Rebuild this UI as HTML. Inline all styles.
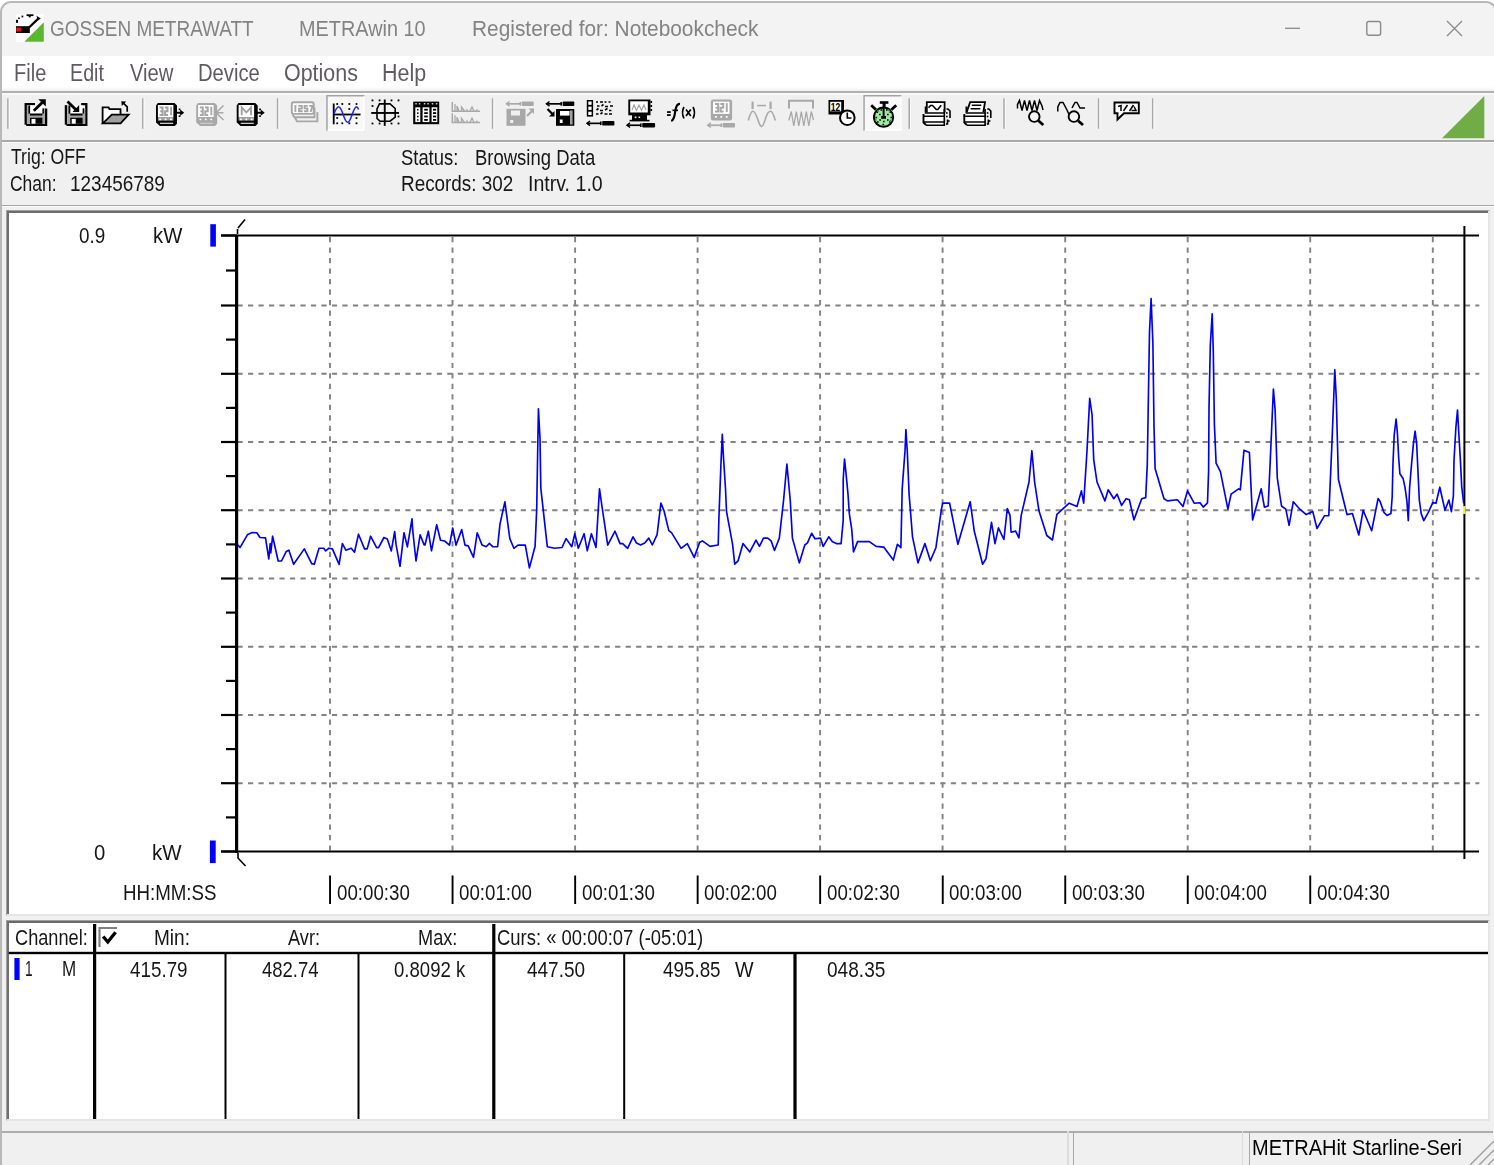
<!DOCTYPE html>
<html><head><meta charset="utf-8">
<style>
html,body{margin:0;padding:0;}
body{width:1494px;height:1165px;overflow:hidden;position:relative;background:#f0f0f0;font-family:"Liberation Sans",sans-serif;}
.a{position:absolute;}
.t{position:absolute;white-space:pre;line-height:1;transform-origin:0 0;font-family:"Liberation Sans",sans-serif;}
svg{position:absolute;left:0;top:0;}
.g{stroke:#828282;stroke-width:1.9;stroke-dasharray:5.2 5.29;}
.gv{stroke:#828282;stroke-width:1.9;stroke-dasharray:5.2 5.29;}
.tk{stroke:#000;stroke-width:2.2;}
</style></head><body>
<!-- window frame -->
<div class="a" style="left:0;top:0;width:1494px;height:1165px;background:#fff"></div>
<div class="a" style="left:0px;top:1px;width:1497px;height:1180px;background:#b8b8b8;border-radius:11px"></div>
<div class="a" style="left:2px;top:2.6px;width:1493px;height:1170px;background:#f0f0f0;border-radius:9.5px"></div>
<div class="a" style="left:2px;top:2.6px;width:1493px;height:53.4px;background:#f3f3f3;border-top-left-radius:9.5px;border-top-right-radius:9.5px"></div>
<!-- menu bar -->
<div class="a" style="left:2px;top:56px;width:1492px;height:35px;background:linear-gradient(#fff 0px,#fff 31px,#f0f0f0 35px)"></div>
<div class="a" style="left:2px;top:91px;width:1492px;height:2px;background:#b0b0b0"></div>
<div class="a" style="left:2px;top:93px;width:1492px;height:2px;background:#f8f8f8"></div>
<!-- toolbar bottom line -->
<div class="a" style="left:2px;top:140px;width:1492px;height:1.5px;background:#a9a9a9"></div>
<div class="a" style="left:2px;top:141.5px;width:1492px;height:1px;background:#fafafa"></div>
<!-- info bottom line -->
<div class="a" style="left:2px;top:204.7px;width:1492px;height:1.5px;background:#a5a5a5"></div>
<div class="a" style="left:2px;top:206.2px;width:1492px;height:1px;background:#fcfcfc"></div>
<!-- chart panel -->
<div class="a" style="left:5.5px;top:210.3px;width:1484.5px;height:705.3px;box-sizing:border-box;border-top:1.3px solid #a0a0a0;border-left:1.4px solid #a0a0a0;border-right:2px solid #e5e5e5;border-bottom:2px solid #e5e5e5"><div style="width:100%;height:100%;box-sizing:border-box;border-top:2.1px solid #6e6e6e;border-left:2px solid #6e6e6e;background:#fff"></div></div>
<!-- table panel -->
<div class="a" style="left:5.5px;top:920.4px;width:1484.5px;height:200.6px;box-sizing:border-box;border-top:1.7px solid #a0a0a0;border-left:1.4px solid #a0a0a0;border-right:2px solid #e5e5e5;border-bottom:2px solid #e5e5e5"><div style="width:100%;height:100%;box-sizing:border-box;border-top:2.1px solid #6a6a6a;border-left:2px solid #707070;background:#fff"></div></div>
<!-- status bar -->
<div class="a" style="left:2px;top:1131px;width:1491px;height:2px;background:#adadad"></div>
<div class="a" style="left:1067px;top:1131px;width:1.5px;height:34px;background:#dcdcdc"></div>
<div class="a" style="left:1073px;top:1131px;width:170px;height:34px;box-sizing:border-box;border-left:1.5px solid #a8a8a8;border-right:1.5px solid #dcdcdc"></div>
<div class="a" style="left:1249px;top:1131px;width:245px;height:34px;box-sizing:border-box;border-left:1.5px solid #a8a8a8"></div>
<svg width="1494" height="1165" viewBox="0 0 1494 1165">
<!-- grip -->
<line x1="1470" y1="1165" x2="1494" y2="1141" stroke="#a0a0a0" stroke-width="1.5"/>
<line x1="1479" y1="1165" x2="1494" y2="1150" stroke="#a0a0a0" stroke-width="1.5"/>
<line x1="1488" y1="1165" x2="1494" y2="1159" stroke="#a0a0a0" stroke-width="1.5"/>
<!-- window controls -->
<line x1="1285" y1="28.3" x2="1300" y2="28.3" stroke="#8a8a8a" stroke-width="1.3"/>
<rect x="1366.8" y="21.5" width="13.8" height="13.8" rx="2" fill="none" stroke="#8a8a8a" stroke-width="1.4"/>
<path d="M1447 21 L1462 36 M1462 21 L1447 36" stroke="#8a8a8a" stroke-width="1.3"/>
<!-- chart -->
<line x1="237.5" y1="305.5" x2="1479.3" y2="305.5" class="g"/>
<line x1="237.5" y1="373.8" x2="1479.3" y2="373.8" class="g"/>
<line x1="237.5" y1="442.0" x2="1479.3" y2="442.0" class="g"/>
<line x1="237.5" y1="510.2" x2="1479.3" y2="510.2" class="g"/>
<line x1="237.5" y1="578.5" x2="1479.3" y2="578.5" class="g"/>
<line x1="237.5" y1="646.8" x2="1479.3" y2="646.8" class="g"/>
<line x1="237.5" y1="715.0" x2="1479.3" y2="715.0" class="g"/>
<line x1="237.5" y1="783.2" x2="1479.3" y2="783.2" class="g"/>
<line x1="330.0" y1="237" x2="330.0" y2="850.5" class="gv"/>
<line x1="452.5" y1="237" x2="452.5" y2="850.5" class="gv"/>
<line x1="575.1" y1="237" x2="575.1" y2="850.5" class="gv"/>
<line x1="697.6" y1="237" x2="697.6" y2="850.5" class="gv"/>
<line x1="820.1" y1="237" x2="820.1" y2="850.5" class="gv"/>
<line x1="942.6" y1="237" x2="942.6" y2="850.5" class="gv"/>
<line x1="1065.2" y1="237" x2="1065.2" y2="850.5" class="gv"/>
<line x1="1187.7" y1="237" x2="1187.7" y2="850.5" class="gv"/>
<line x1="1310.2" y1="237" x2="1310.2" y2="850.5" class="gv"/>
<line x1="1432.8" y1="237" x2="1432.8" y2="850.5" class="gv"/>
<line x1="221" y1="235.5" x2="237" y2="235.5" class="tk"/>
<line x1="221" y1="305.5" x2="237" y2="305.5" class="tk"/>
<line x1="221" y1="373.8" x2="237" y2="373.8" class="tk"/>
<line x1="221" y1="442.0" x2="237" y2="442.0" class="tk"/>
<line x1="221" y1="510.2" x2="237" y2="510.2" class="tk"/>
<line x1="221" y1="578.5" x2="237" y2="578.5" class="tk"/>
<line x1="221" y1="646.8" x2="237" y2="646.8" class="tk"/>
<line x1="221" y1="715.0" x2="237" y2="715.0" class="tk"/>
<line x1="221" y1="783.2" x2="237" y2="783.2" class="tk"/>
<line x1="221" y1="851.5" x2="237" y2="851.5" class="tk"/>
<line x1="226" y1="270.5" x2="237" y2="270.5" class="tk"/>
<line x1="226" y1="339.6" x2="237" y2="339.6" class="tk"/>
<line x1="226" y1="407.9" x2="237" y2="407.9" class="tk"/>
<line x1="226" y1="476.1" x2="237" y2="476.1" class="tk"/>
<line x1="226" y1="544.4" x2="237" y2="544.4" class="tk"/>
<line x1="226" y1="612.6" x2="237" y2="612.6" class="tk"/>
<line x1="226" y1="680.9" x2="237" y2="680.9" class="tk"/>
<line x1="226" y1="749.1" x2="237" y2="749.1" class="tk"/>
<line x1="226" y1="817.4" x2="237" y2="817.4" class="tk"/>
<line x1="236.6" y1="235" x2="236.6" y2="853" stroke="#000" stroke-width="3.2"/>
<line x1="221" y1="235.5" x2="1479" y2="235.5" stroke="#000" stroke-width="2.2"/>
<line x1="221" y1="851.5" x2="1479" y2="851.5" stroke="#000" stroke-width="2.2"/>
<line x1="1464.4" y1="226" x2="1464.4" y2="859" stroke="#000" stroke-width="2"/>
<path d="M237.5 229 L237.5 234 M238 228 L245 219.5" stroke="#000" stroke-width="1.6" fill="none"/>
<path d="M238 853 L238 858 L245.5 866" stroke="#000" stroke-width="1.6" fill="none"/>
<rect x="210.3" y="224.2" width="5.6" height="22.4" fill="#0000ff"/>
<rect x="209.9" y="840.5" width="5.8" height="22.6" fill="#0000ff"/>
<polyline points="238.0,544.9 240.0,547.6 247.4,534.8 252.0,532.6 256.8,532.8 260.0,537.5 265.5,537.9 268.8,559.0 270.2,543.5 270.8,553.0 272.6,536.2 278.2,561.0 281.5,561.0 286.2,551.6 288.9,550.2 293.6,564.3 304.3,548.9 311.7,563.6 314.3,564.3 319.0,548.2 323.7,548.2 325.7,550.9 329.0,548.2 332.4,548.9 339.1,564.3 342.4,543.5 345.8,550.2 351.2,548.2 354.5,552.2 358.5,534.2 364.5,548.9 367.2,548.9 370.6,536.2 376.6,547.6 378.6,547.6 383.9,537.5 387.3,538.9 391.3,550.9 394.7,531.5 396.0,544.2 400.0,566.3 404.0,532.8 407.4,546.9 412.0,518.8 412.7,530.2 416.0,561.0 420.1,534.8 424.1,544.9 425.0,545.0 428.3,531.2 431.5,550.8 436.7,524.7 440.5,540.2 444.6,541.0 449.5,545.1 452.7,528.0 456.0,545.1 461.7,529.6 465.0,545.1 468.2,545.9 473.5,557.3 477.2,532.8 482.1,545.1 486.2,546.7 489.4,543.4 492.7,546.7 497.6,546.7 500.0,523.9 504.9,501.9 509.8,538.6 513.9,548.3 518.0,545.1 525.3,545.1 529.4,567.9 535.1,546.3 536.7,509.2 538.4,408.9 540.0,438.2 540.8,488.0 547.3,546.7 554.7,548.3 562.0,547.5 566.1,538.6 571.8,546.7 574.8,533.7 578.3,548.3 584.1,533.7 587.3,550.8 591.4,533.7 596.0,547.5 599.5,488.8 601.2,501.0 607.7,545.1 615.0,531.2 620.0,543.6 622.7,543.6 627.6,548.4 633.0,536.8 636.5,543.0 640.6,545.0 644.7,543.0 648.8,538.1 652.3,545.0 657.1,534.7 660.9,503.1 664.0,510.7 668.8,530.6 671.5,532.6 681.1,548.4 687.3,543.6 694.2,557.4 699.7,542.3 702.4,540.9 710.0,546.4 718.2,545.0 718.9,518.2 721.0,462.6 722.3,434.4 723.3,454.3 725.5,488.7 726.5,511.3 732.6,544.3 734.7,564.2 738.1,560.8 743.0,543.6 749.8,551.9 756.0,540.2 759.4,546.4 763.5,538.1 767.7,538.1 771.1,540.9 774.5,550.5 779.3,538.1 783.5,501.0 786.9,464.0 790.3,501.0 792.4,538.1 799.3,562.9 804.8,545.0 807.5,542.9 811.6,533.3 815.0,538.8 820.5,538.1 823.2,546.4 828.7,536.8 832.2,541.6 836.3,543.6 841.1,543.6 843.2,520.3 843.2,479.8 844.5,459.1 845.9,472.2 848.0,494.2 849.3,513.4 851.8,529.9 853.5,551.9 857.6,541.6 862.4,541.6 869.3,541.6 876.1,546.4 883.7,547.1 893.3,560.1 897.4,544.3 900.9,547.7 902.2,488.7 905.0,450.9 905.9,429.6 907.3,451.6 909.1,494.2 912.5,536.8 918.0,562.9 924.9,543.6 930.4,560.8 935.9,547.7 941.4,509.3 942.7,503.1 949.6,503.1 957.9,544.3 970.2,501.7 974.3,531.3 982.6,564.2 986.0,558.7 991.5,522.3 995.0,543.6 998.4,527.8 1003.9,539.5 1007.3,508.6 1010.0,515.4 1011.1,532.2 1015.6,531.1 1018.9,537.8 1021.2,515.4 1029.0,482.0 1031.9,450.7 1034.6,482.0 1039.0,511.0 1046.8,535.5 1052.4,540.0 1056.9,514.3 1069.2,503.2 1077.0,506.5 1081.4,490.9 1083.7,503.2 1087.0,450.7 1089.7,398.3 1092.1,415.0 1093.7,459.6 1097.0,482.0 1104.9,500.9 1108.2,489.8 1113.8,498.7 1117.1,494.2 1121.6,505.4 1126.1,498.7 1129.4,499.8 1133.9,519.9 1141.7,498.7 1145.7,497.6 1147.3,464.1 1148.4,397.1 1149.5,332.4 1151.1,298.5 1152.9,343.6 1154.0,426.2 1155.1,468.6 1164.0,498.7 1167.4,500.9 1177.4,499.8 1183.0,506.5 1187.5,490.9 1194.2,503.2 1200.0,502.8 1203.2,507.1 1207.5,502.8 1208.6,471.7 1209.0,408.4 1210.3,345.1 1212.2,313.9 1213.3,351.5 1214.4,424.5 1216.1,463.1 1220.4,471.7 1227.9,509.2 1231.1,494.2 1238.6,488.8 1240.3,489.9 1244.0,450.2 1249.4,452.4 1252.6,520.0 1261.2,488.8 1264.4,507.1 1268.2,506.0 1270.8,448.1 1273.4,389.1 1275.1,409.4 1277.3,478.1 1281.5,506.0 1285.8,509.2 1289.1,525.3 1293.3,501.7 1299.8,509.2 1306.2,514.6 1312.7,511.4 1317.0,528.5 1324.5,515.7 1328.8,515.7 1332.0,441.6 1334.8,369.7 1336.3,398.7 1338.4,479.2 1347.0,514.6 1352.4,513.5 1358.8,535.0 1363.1,510.3 1371.7,530.7 1378.1,498.5 1380.0,501.3 1383.9,512.3 1387.1,515.5 1390.9,513.6 1392.2,496.8 1392.9,465.9 1394.2,435.0 1396.1,419.0 1397.4,433.1 1398.7,458.2 1399.9,473.7 1403.2,478.8 1405.1,487.8 1407.0,502.0 1407.7,512.3 1408.3,520.6 1409.6,487.8 1411.5,464.6 1413.5,442.8 1415.1,431.2 1416.7,444.1 1418.0,472.4 1419.3,500.0 1421.2,513.6 1423.8,520.6 1428.3,512.3 1432.8,502.6 1436.0,503.3 1439.8,487.2 1445.0,510.3 1448.9,500.0 1451.4,511.6 1453.4,495.5 1454.0,460.8 1455.9,427.3 1457.5,410.0 1458.5,428.0 1460.4,460.1 1461.7,486.5 1463.7,503.3" fill="none" stroke="#0000f0" stroke-width="1.65" stroke-linejoin="round"/>
<rect x="1463" y="506" width="2.5" height="8" fill="#f0f040"/>
<!-- x ticks -->
<rect x="329.1" y="875.5" width="1.9" height="28.5" fill="#000"/>
<rect x="451.6" y="875.5" width="1.9" height="28.5" fill="#000"/>
<rect x="574.2" y="875.5" width="1.9" height="28.5" fill="#000"/>
<rect x="696.7" y="875.5" width="1.9" height="28.5" fill="#000"/>
<rect x="819.2" y="875.5" width="1.9" height="28.5" fill="#000"/>
<rect x="941.8" y="875.5" width="1.9" height="28.5" fill="#000"/>
<rect x="1064.3" y="875.5" width="1.9" height="28.5" fill="#000"/>
<rect x="1186.8" y="875.5" width="1.9" height="28.5" fill="#000"/>
<rect x="1309.3" y="875.5" width="1.9" height="28.5" fill="#000"/>
<!-- table lines -->
<rect x="93" y="924" width="3.2" height="195" fill="#000"/>
<rect x="492.2" y="924" width="3.2" height="195" fill="#000"/>
<rect x="793.4" y="953" width="3.2" height="166" fill="#000"/>
<rect x="224.5" y="953" width="2" height="166" fill="#000"/>
<rect x="357.5" y="953" width="2" height="166" fill="#000"/>
<rect x="623.2" y="953" width="2" height="166" fill="#000"/>
<rect x="8.7" y="951.8" width="1479.3" height="2.4" fill="#000"/>
<!-- blue marker row -->
<rect x="14.4" y="958" width="5.2" height="22" fill="#0000ff"/>
<!-- checkbox -->
<path d="M99.5 947 L99.5 928 L117 928" stroke="#808080" stroke-width="2.2" fill="none"/>
<path d="M103.2 936.5 L107.8 942 L115.6 932.2" stroke="#000" stroke-width="3.3" fill="none"/>
<!-- green triangle -->
<polygon points="1442,138.2 1484.3,96 1484.3,138.2" fill="#70ad47"/>
<rect x="7.15" y="98.3" width="1.6" height="30.5" fill="#a8a8a8"/><rect x="8.75" y="98.3" width="1" height="30.5" fill="#fbfbfb"/>
<rect x="142.05" y="98.3" width="1.6" height="30.5" fill="#a8a8a8"/><rect x="143.65" y="98.3" width="1" height="30.5" fill="#fbfbfb"/>
<rect x="276.85" y="98.3" width="1.6" height="30.5" fill="#a8a8a8"/><rect x="278.45000000000005" y="98.3" width="1" height="30.5" fill="#fbfbfb"/>
<rect x="491.85" y="98.3" width="1.6" height="30.5" fill="#a8a8a8"/><rect x="493.45000000000005" y="98.3" width="1" height="30.5" fill="#fbfbfb"/>
<rect x="908.45" y="98.3" width="1.6" height="30.5" fill="#a8a8a8"/><rect x="910.0500000000001" y="98.3" width="1" height="30.5" fill="#fbfbfb"/>
<rect x="1003.25" y="98.3" width="1.6" height="30.5" fill="#a8a8a8"/><rect x="1004.85" y="98.3" width="1" height="30.5" fill="#fbfbfb"/>
<rect x="1097.85" y="98.3" width="1.6" height="30.5" fill="#a8a8a8"/><rect x="1099.4499999999998" y="98.3" width="1" height="30.5" fill="#fbfbfb"/>
<rect x="1151.95" y="98.3" width="1.6" height="30.5" fill="#a8a8a8"/><rect x="1153.55" y="98.3" width="1" height="30.5" fill="#fbfbfb"/>
<rect x="326.2" y="95" width="38.19999999999999" height="35.8" fill="#f8f8f8"/>
<path d="M326.95 130.8 V95.75 H364.4" stroke="#a3a3a3" stroke-width="1.5" fill="none"/>
<path d="M327.7 130.2 H363.9 V96.5" stroke="#ffffff" stroke-width="1.2" fill="none"/>
<rect x="863.3" y="95" width="38.10000000000002" height="35.8" fill="#f8f8f8"/>
<path d="M864.05 130.8 V95.75 H901.4" stroke="#a3a3a3" stroke-width="1.5" fill="none"/>
<path d="M864.8 130.2 H900.9 V96.5" stroke="#ffffff" stroke-width="1.2" fill="none"/>
<path d="M25.7 124.7 V104.2 H35.0" stroke="#000" stroke-width="2.3" fill="none"/><path d="M46.099999999999994 108.4 V124.80000000000001 H26.2" stroke="#000" stroke-width="2.3" fill="none"/><rect x="28.7" y="105.5" width="14" height="8.5" fill="#fff"/><rect x="27.0" y="105.5" width="3" height="18.2" fill="#a6a6a6"/><rect x="42.5" y="108.4" width="2.5" height="15.3" fill="#a6a6a6"/><rect x="30.0" y="115.5" width="12.5" height="2.1" fill="#a6a6a6"/><rect x="28.4" y="105.5" width="1.7" height="8.2" fill="#000"/><rect x="42.5" y="108.4" width="1.4" height="5.3" fill="#000"/><rect x="30.0" y="113.5" width="12.5" height="2.1" fill="#000"/><rect x="30.0" y="117.60000000000001" width="12.5" height="6.2" fill="#000"/><rect x="31.5" y="118.9" width="4" height="4.8" fill="#fff"/>
<path d="M33.8 110.8 L42.5 102.3" stroke="#000" stroke-width="2.8"/><polygon points="38.3,99.2 45.8,99.2 45.8,106.5" fill="#000"/>
<path d="M65.9 105.2 V124.7" stroke="#000" stroke-width="2.3" fill="none"/><path d="M81.10000000000001 104.2 H86.30000000000001 V124.80000000000001 H66.4" stroke="#000" stroke-width="2.3" fill="none"/><rect x="68.9" y="105.5" width="14" height="8.5" fill="#fff"/><rect x="67.2" y="105.5" width="3" height="18.2" fill="#a6a6a6"/><rect x="82.7" y="108.4" width="2.5" height="15.3" fill="#a6a6a6"/><rect x="70.2" y="115.5" width="12.5" height="2.1" fill="#a6a6a6"/><rect x="68.60000000000001" y="105.5" width="1.7" height="8.2" fill="#000"/><rect x="82.7" y="108.4" width="1.4" height="5.3" fill="#000"/><rect x="70.2" y="113.5" width="12.5" height="2.1" fill="#000"/><rect x="70.2" y="117.60000000000001" width="12.5" height="6.2" fill="#000"/><rect x="71.7" y="118.9" width="4" height="4.8" fill="#fff"/>
<path d="M67.5 101.5 L76.5 110.2" stroke="#000" stroke-width="2.8"/><polygon points="72.5,112 79.2,112 79.2,105" fill="#000"/>
<path d="M102.6 123.2 V107.4 H108.6 L109.4 109.1 H120.5 V114.2" stroke="#000" stroke-width="1.8" fill="#fff"/><polygon points="102.8,123.3 111.8,114.7 128.6,114.7 120.6,123.3" fill="#a0a0a0" stroke="#000" stroke-width="1.8"/><path d="M127.2 111.7 V106.8 L123.6 103.3" stroke="#000" stroke-width="1.7" fill="none"/><polygon points="121.3,101.2 126.2,101.6 121.8,106" fill="#000"/>
<path d="M157.8 102.9 H174.5 L177 105.4 V123.7 L174.8 126.0 H159.8 L157.8 124.10000000000001 L156 122.4 V105.4 Z" fill="#000"/><rect x="157.9" y="105.0" width="15.5" height="12" fill="#fff"/><path d="M159.6 107.60000000000001 H162.6 V115.0 H159.6 M160.2 111.30000000000001 H162.6" stroke="#a0a0a0" stroke-width="2" fill="none"/><path d="M164.8 107.60000000000001 H167.5 V111.30000000000001 H165.1 V115.0 H168" stroke="#a0a0a0" stroke-width="2" fill="none"/><rect x="170.2" y="106.7" width="1.8" height="8.6" fill="#a0a0a0"/><rect x="157.9" y="117.0" width="15.5" height="3.6" fill="#a0a0a0"/><rect x="159.29999999999998" y="118.60000000000001" width="1.8" height="1.6" fill="#fff"/><rect x="164.7" y="118.60000000000001" width="1.8" height="1.6" fill="#fff"/><rect x="170.1" y="118.60000000000001" width="1.8" height="1.6" fill="#fff"/><rect x="160" y="122.7" width="13.1" height="1.3" fill="#c8c8c8"/>
<rect x="176.5" y="111.8" width="5" height="1.9" fill="#000"/><polygon points="184.2,112.7 180.2,109.6 180.2,115.8" fill="#000"/><rect x="178.7" y="108.5" width="1.7" height="1.7" fill="#000"/><rect x="178.7" y="115.3" width="1.7" height="1.7" fill="#000"/>
<path d="M198.0 102.9 H214.7 L217.2 105.4 V123.7 L215.0 126.0 H200.0 L198.0 124.10000000000001 L196.2 122.4 V105.4 Z" fill="#a8a8a8"/><rect x="198.1" y="105.0" width="15.5" height="12" fill="#fff"/><path d="M199.79999999999998 107.60000000000001 H202.79999999999998 V115.0 H199.79999999999998 M200.39999999999998 111.30000000000001 H202.79999999999998" stroke="#a8a8a8" stroke-width="2" fill="none"/><path d="M205.0 107.60000000000001 H207.7 V111.30000000000001 H205.29999999999998 V115.0 H208.2" stroke="#a8a8a8" stroke-width="2" fill="none"/><rect x="210.39999999999998" y="106.7" width="1.8" height="8.6" fill="#a8a8a8"/><rect x="198.1" y="117.0" width="15.5" height="3.6" fill="#a8a8a8"/><rect x="199.49999999999997" y="118.60000000000001" width="1.8" height="1.6" fill="#fff"/><rect x="204.89999999999998" y="118.60000000000001" width="1.8" height="1.6" fill="#fff"/><rect x="210.29999999999998" y="118.60000000000001" width="1.8" height="1.6" fill="#fff"/><rect x="200.2" y="122.7" width="13.1" height="1.3" fill="#c8c8c8"/>
<path d="M216.5 112.8 H223.5 M217 112 L223.5 105.5 M217 113.5 L223.5 120" stroke="#a8a8a8" stroke-width="1.5" fill="none"/>
<path d="M238.5 102.9 H255.2 L257.7 105.4 V123.7 L255.5 126.0 H240.5 L238.5 124.10000000000001 L236.7 122.4 V105.4 Z" fill="#000"/><rect x="238.6" y="105.0" width="15.5" height="12" fill="#fff"/><path d="M241.7 115.2 V107.4 L246.39999999999998 112.4 L251.0 107.4 V115.2" stroke="#a0a0a0" stroke-width="1.9" fill="none"/><rect x="238.6" y="117.0" width="15.5" height="3.6" fill="#a0a0a0"/><rect x="239.99999999999997" y="118.60000000000001" width="1.8" height="1.6" fill="#fff"/><rect x="245.39999999999998" y="118.60000000000001" width="1.8" height="1.6" fill="#fff"/><rect x="250.79999999999998" y="118.60000000000001" width="1.8" height="1.6" fill="#fff"/><rect x="240.7" y="122.7" width="13.1" height="1.3" fill="#c8c8c8"/>
<rect x="257" y="111.8" width="5" height="1.9" fill="#000"/><polygon points="264.7,112.7 260.7,109.6 260.7,115.8" fill="#000"/><rect x="259.2" y="108.5" width="1.7" height="1.7" fill="#000"/><rect x="259.2" y="115.3" width="1.7" height="1.7" fill="#000"/>
<rect x="291.8" y="102.3" width="21.9" height="11.6" rx="1.8" fill="#fff" stroke="#a6a6a6" stroke-width="1.9"/><path d="M295.4 105 V112 M298.3 105.9 H301.8 V108.6 H299 V111.3 H302.6 M307.8 105.9 H304.6 V108.4 H307.4 V111.3 H304 M309.2 105.9 H312.6 L310.6 112" stroke="#a6a6a6" stroke-width="1.9" fill="none"/><path d="M292.3 114.5 L294.5 117.3 H314.5 V107.5 M295 117.8 L297 121.4 H317.4 V112" stroke="#a6a6a6" stroke-width="1.9" fill="none"/>
<rect x="332.8" y="103.5" width="1.8" height="20.8" fill="#000"/><rect x="333" y="113.6" width="27.5" height="1.8" fill="#000"/>
<rect x="336.3" y="103.1" width="1.8" height="1.8" fill="#000"/>
<rect x="341.40000000000003" y="103.1" width="1.8" height="1.8" fill="#000"/>
<rect x="348.40000000000003" y="103.1" width="1.8" height="1.8" fill="#000"/>
<rect x="355.6" y="103.1" width="1.8" height="1.8" fill="#000"/>
<rect x="348.40000000000003" y="108.1" width="1.8" height="1.8" fill="#000"/>
<rect x="336.3" y="117.1" width="1.8" height="1.8" fill="#000"/>
<rect x="355.6" y="117.1" width="1.8" height="1.8" fill="#000"/>
<rect x="336.3" y="122.39999999999999" width="1.8" height="1.8" fill="#000"/>
<rect x="341.40000000000003" y="122.39999999999999" width="1.8" height="1.8" fill="#000"/>
<rect x="348.40000000000003" y="122.39999999999999" width="1.8" height="1.8" fill="#000"/>
<rect x="355.6" y="122.39999999999999" width="1.8" height="1.8" fill="#000"/>
<path d="M334 113.5 C336 109, 337.5 106.5, 338.7 106.8 C340.5 107.2, 342 111, 343.5 115.5 C345 120, 346.5 122.5, 347.8 122.3 C349.5 122, 351 118, 352.5 113.5 C354 109.5, 355.5 106.8, 356.6 106.8 C357.5 107, 358.2 108.5, 358.6 109.5" stroke="#2020ff" stroke-width="1.5" fill="none"/>
<rect x="383.8" y="99.5" width="1.9" height="26.3" fill="#000"/><rect x="371.2" y="112" width="27.8" height="1.9" fill="#000"/><path d="M379.5 103.9 H390 L395.2 108.5 V117 L390 121.2 H380 L377 118.5 V109 Z" stroke="#000" stroke-width="1.6" fill="none"/>
<rect x="371.6" y="99.5" width="1.8" height="1.8" fill="#000"/>
<rect x="378.70000000000005" y="99.5" width="1.8" height="1.8" fill="#000"/>
<rect x="390.6" y="99.5" width="1.8" height="1.8" fill="#000"/>
<rect x="397.6" y="99.5" width="1.8" height="1.8" fill="#000"/>
<rect x="371.6" y="105.1" width="1.8" height="1.8" fill="#000"/>
<rect x="397.6" y="115.6" width="1.8" height="1.8" fill="#000"/>
<rect x="371.6" y="122.6" width="1.8" height="1.8" fill="#000"/>
<rect x="378.70000000000005" y="122.6" width="1.8" height="1.8" fill="#000"/>
<rect x="390.6" y="122.6" width="1.8" height="1.8" fill="#000"/>
<rect x="397.6" y="122.6" width="1.8" height="1.8" fill="#000"/>
<rect x="413.2" y="101.6" width="26" height="22.6" fill="#000"/><rect x="415.3" y="107.3" width="5" height="14.8" fill="#fff"/><rect x="422.6" y="107.3" width="6.8" height="14.8" fill="#fff"/><rect x="431.6" y="107.3" width="5.7" height="14.8" fill="#fff"/>
<rect x="415.3" y="103" width="1.5" height="1.5" fill="#ccc"/>
<rect x="418.8" y="103" width="1.5" height="1.5" fill="#ccc"/>
<rect x="423.8" y="103" width="1.5" height="1.5" fill="#ccc"/>
<rect x="427.3" y="103" width="1.5" height="1.5" fill="#ccc"/>
<rect x="431.8" y="103" width="1.5" height="1.5" fill="#ccc"/>
<rect x="435.8" y="103" width="1.5" height="1.5" fill="#ccc"/>
<rect x="417" y="109.0" width="1.5" height="1.5" fill="#000"/><rect x="424.2" y="108.8" width="3.6" height="1.8" fill="#000"/><rect x="433" y="108.8" width="3.2" height="1.8" fill="#000"/>
<rect x="417" y="112.4" width="1.5" height="1.5" fill="#000"/><rect x="424.2" y="112.2" width="3.6" height="1.8" fill="#000"/><rect x="433" y="112.2" width="3.2" height="1.8" fill="#000"/>
<rect x="417" y="115.8" width="1.5" height="1.5" fill="#000"/><rect x="424.2" y="115.6" width="3.6" height="1.8" fill="#000"/><rect x="433" y="115.6" width="3.2" height="1.8" fill="#000"/>
<rect x="417" y="119.2" width="1.5" height="1.5" fill="#000"/><rect x="424.2" y="119.0" width="3.6" height="1.8" fill="#000"/><rect x="433" y="119.0" width="3.2" height="1.8" fill="#000"/>
<path d="M452.3 102 V111.2 H480" stroke="#a8a8a8" stroke-width="1.5" fill="none"/><path d="M455 111 V104 M457 111 V106 L459 111 M461.5 111 V107 L464.5 111 M467 111 V109 M470 111 L472 107 L474 111 M476 111 L477.5 109.5" stroke="#a8a8a8" stroke-width="1.3" fill="none"/>
<path d="M452.3 113.3 V122.5 H480" stroke="#a8a8a8" stroke-width="1.5" fill="none"/><path d="M455 122.3 V115.3 M457 122.3 V117.3 L459 122.3 M461.5 122.3 V118.3 L464.5 122.3 M467 122.3 V120.3 M470 122.3 L472 118.3 L474 122.3 M476 122.3 L477.5 120.8" stroke="#a8a8a8" stroke-width="1.3" fill="none"/>
<path d="M509.5 101.5 L506.5 103.8 L509.5 106.1" stroke="#a8a8a8" stroke-width="1.5" fill="none"/><rect x="506.5" y="103.0" width="14.0" height="1.7" fill="#a8a8a8"/><rect x="519.5" y="102.0" width="1.6" height="3.6000000000000005" fill="#a8a8a8"/><rect x="521.7" y="101.6" width="12.000000000000046" height="4.4" rx="0.8" fill="#a8a8a8"/>
<rect x="506.5" y="108.8" width="19" height="17" fill="#a8a8a8"/><rect x="511" y="110.5" width="9" height="5" fill="#f0f0f0"/><rect x="510.2" y="120" width="3" height="3" fill="#f0f0f0"/><path d="M527 116 L532 111" stroke="#a8a8a8" stroke-width="2.2"/><polygon points="528.5,108.5 534,108.5 534,114" fill="#a8a8a8"/>
<path d="M549.5 101.5 L546.5 103.8 L549.5 106.1" stroke="#000" stroke-width="1.5" fill="none"/><rect x="546.5" y="103.0" width="14.899999999999977" height="1.7" fill="#000"/><rect x="560.4" y="102.0" width="1.6" height="3.6000000000000005" fill="#000"/><rect x="562.6" y="101.6" width="11.699999999999978" height="4.4" rx="0.8" fill="#000"/>
<rect x="556" y="109" width="18.3" height="16.8" fill="#000"/><rect x="560" y="111" width="9.5" height="4.6" fill="#fff"/><rect x="570" y="110.5" width="2.6" height="14" fill="#a0a0a0"/><rect x="559.8" y="119.5" width="2.8" height="3.5" fill="#fff"/><path d="M547.5 109 L552.5 114" stroke="#000" stroke-width="2.2"/><polygon points="554.5,116.5 549,116.5 554.5,111" fill="#000"/>
<rect x="586.8" y="100" width="6.3" height="16.6" fill="#000"/><rect x="588.3" y="101.5" width="3.3" height="3.3" fill="#fff"/><rect x="588.3" y="106.6" width="3.3" height="3.3" fill="#fff"/><rect x="588.3" y="111.7" width="3.3" height="3.3" fill="#fff"/>
<path d="M596 102 h2 M600 102 h3 M604.5 102 h2 M608.5 102 h2 M597 106 h2.5 M601.5 106 l2 -1.5 M605 106.5 h3 M610 106 h3 M596.5 110 l2 -1.5 M600 110.5 h3 M605 110 l2.5 -1.5 M609 110.5 h2.5 M596 114 h2.5 M600.5 114 l2 -1.5 M604.5 114 h3 M609 114 h3" stroke="#000" stroke-width="1.6" fill="none"/>
<path d="M590 121.0 L587 123.3 L590 125.6" stroke="#000" stroke-width="1.5" fill="none"/><rect x="587" y="122.5" width="14" height="1.7" fill="#000"/><rect x="600" y="121.5" width="1.6" height="3.6000000000000005" fill="#000"/><rect x="602.2" y="121.1" width="12.199999999999978" height="4.4" rx="0.8" fill="#000"/>
<rect x="628.3" y="99.5" width="22.2" height="15.8" fill="#000"/><rect x="630.2" y="101.3" width="17.6" height="11.2" fill="#fff"/><path d="M632 110 L634 105 L636.5 110.5 L639 105 L641.5 110.5 L644 105 L646 110" stroke="#a0a0a0" stroke-width="1.1" fill="none"/><rect x="632" y="115" width="15" height="5.5" fill="#000"/><rect x="634.8" y="116.5" width="1.6" height="1.6" fill="#fff"/><rect x="638.5" y="116.5" width="1.6" height="1.6" fill="#fff"/><rect x="629.5" y="119.8" width="20" height="1.6" fill="#000"/><rect x="650.5" y="101" width="1.6" height="2" fill="#000"/><rect x="650.5" y="105" width="1.6" height="2" fill="#000"/><rect x="650.5" y="109" width="1.6" height="2" fill="#000"/>
<path d="M630 122.9 L627 125.2 L630 127.5" stroke="#000" stroke-width="1.5" fill="none"/><rect x="627" y="124.4" width="14" height="1.7" fill="#000"/><rect x="640" y="123.4" width="1.6" height="3.6000000000000005" fill="#000"/><rect x="642.2" y="123.0" width="12.900000000000023" height="4.4" rx="0.8" fill="#000"/>
<rect x="667" y="111.2" width="3.8" height="1.7" fill="#000"/><rect x="667" y="114.2" width="3.8" height="1.7" fill="#000"/><path d="M671.2 121 C673.5 120.5, 674.5 117, 675.3 111 C676 106, 677 103.5, 680 103.8" stroke="#000" stroke-width="2.2" fill="none"/><path d="M672.5 110.3 H678" stroke="#000" stroke-width="1.7"/><path d="M684 107 C682.3 110, 682.3 115, 684 118.5 M693 107 C694.7 110, 694.7 115, 693 118.5 M686 109.5 L690.8 116 M690.8 109.5 L686 116" stroke="#000" stroke-width="1.7" fill="none"/>
<rect x="710.8" y="99.6" width="21.3" height="20.8" rx="2.5" fill="#a8a8a8"/><rect x="713" y="101.6" width="16.5" height="12.3" fill="#fff"/><path d="M715 104 H718.2 V111.5 H715 M715.6 107.8 H718.2 M720.3 104 H723.2 V107.8 H720.6 V111.5 H723.6" stroke="#a8a8a8" stroke-width="2" fill="none"/><rect x="725.8" y="103.2" width="1.9" height="8.8" fill="#a8a8a8"/><rect x="715" y="116" width="1.8" height="1.8" fill="#fff"/><rect x="720.4" y="116" width="1.8" height="1.8" fill="#fff"/><rect x="725.8" y="116" width="1.8" height="1.8" fill="#fff"/>
<path d="M710.8 122.9 L707.8 125.2 L710.8 127.5" stroke="#a8a8a8" stroke-width="1.5" fill="none"/><rect x="707.8" y="124.4" width="13.700000000000045" height="1.7" fill="#a8a8a8"/><rect x="720.5" y="123.4" width="1.6" height="3.6000000000000005" fill="#a8a8a8"/><rect x="722.7" y="123.0" width="12.3" height="4.4" rx="0.8" fill="#a8a8a8"/>
<rect x="751.5" y="101.6" width="2.2" height="7.5" fill="#a8a8a8"/><rect x="769.5" y="101.6" width="2.2" height="7.5" fill="#a8a8a8"/><rect x="757" y="104.8" width="9" height="1.5" fill="#a8a8a8"/><path d="M748.3 120.5 C750 114, 751.5 111.3, 753 111.3 C755 111.3, 757 117, 758.5 121.5 C760 126, 761 126.5, 761.8 126.5 C763 126.5, 764.5 122, 766 117 C767.5 113, 769 111.3, 770.5 111.3 C772 111.3, 773.5 114, 775.3 120.5" stroke="#a8a8a8" stroke-width="1.6" fill="none"/>
<path d="M789 108.5 V100.8 H813 V108.5" stroke="#a8a8a8" stroke-width="2" fill="none"/><path d="M788.8 120.5 L791.3 111.5 L793.8 126 L796.3 111.5 L798.8 126 L801.3 111.5 L803.8 126 L806.3 111.5 L808.8 126 L811.3 111.5 L813.5 120" stroke="#a8a8a8" stroke-width="1.3" fill="none"/>
<rect x="828.5" y="100" width="15.5" height="14.5" fill="#000"/><rect x="830.2" y="101.8" width="11" height="9.5" fill="#fff"/><text x="830.8" y="110.6" font-family="Liberation Sans" font-weight="bold" font-size="10" fill="#000" textLength="9.5" lengthAdjust="spacingAndGlyphs">12</text><circle cx="847.3" cy="117.7" r="7.3" fill="#fff" stroke="#000" stroke-width="2"/><path d="M847.3 112.5 V118 H851.5" stroke="#000" stroke-width="1.6" fill="none"/>
<rect x="879.8" y="101.2" width="8.6" height="2.6" fill="#000"/><rect x="882.6" y="103" width="3" height="4.5" fill="#000"/><path d="M871.2 105.3 L876 109.8 M896.2 105.3 L891.4 109.8" stroke="#000" stroke-width="2.8"/><circle cx="883.6" cy="117.2" r="9.6" fill="#9fe8a2" stroke="#000" stroke-width="2"/><path d="M876.5 112.2 h1.6 M880.5 110 h1.6 M886 110 h1.6 M889.5 112.2 h1.6 M875.5 117.5 h1.6 M890.5 117.5 h1.6 M877 122 h1.6 M882.5 124.5 h1.6 M889 122 h1.6 M879 114.5 h1.6 M887 114.5 h1.6 M879.3 120 h1.6 M887 120 h1.6 M883 121.5 h1.6" stroke="#000" stroke-width="1.6"/><path d="M877.5 110.5 l1.5 1.5 M888 109.5 l1.5 1.5 M875 121 l1.5 -1.5 M891 120 l-1.5 1.5" stroke="#22aa33" stroke-width="1.4"/><rect x="882.6" y="107.5" width="2" height="9.5" fill="#000"/><rect x="881.2" y="116" width="4.8" height="2.8" fill="#000"/>
<path d="M926.8 113 V102.2 H944.6 V112.5" stroke="#000" stroke-width="1.8" fill="#fff"/><path d="M928.5 107.8 L930.5 105.5 H932.5 L936.3 109.5 H937.8 L941.2 105.3" stroke="#000" stroke-width="1.6" fill="none"/><path d="M925.6 106.5 V113" stroke="#000" stroke-width="1.8"/><rect x="923.5" y="112.5" width="21" height="13.2" fill="#fff"/><path d="M924.8 113.1 H944.2 M923.0 116.3 H945.0 M923.5 121.9 H945.0 M926.0 125.2 H944.2" stroke="#000" stroke-width="1.5" fill="none"/><path d="M923.5 114 V122.5 L926.0 125" stroke="#000" stroke-width="1.9" fill="none"/><path d="M944.3 109 V126 M946.5 109 H948.0 L950.0 111 V118 M947.5 119.5 V124.5" stroke="#000" stroke-width="1.6" fill="none"/><rect x="946.0" y="112.2" width="1.6" height="1.6" fill="#000"/><rect x="946.0" y="115.7" width="1.6" height="1.6" fill="#000"/><rect x="948.0" y="120.2" width="1.6" height="1.6" fill="#000"/><rect x="946.0" y="123.2" width="1.6" height="1.6" fill="#000"/>
<path d="M966.6 112.5 L970.1 102.2 H985.0 L983.3 112.5" stroke="#000" stroke-width="1.8" fill="#fff"/><path d="M971.8 105.3 H981.3 M970.6 108.8 H980.3" stroke="#000" stroke-width="1.5" fill="none"/><path d="M966.4 106.5 V113" stroke="#000" stroke-width="1.8"/><rect x="964.3" y="112.5" width="21" height="13.2" fill="#fff"/><path d="M965.6 113.1 H985.0 M963.8 116.3 H985.8 M964.3 121.9 H985.8 M966.8 125.2 H985.0" stroke="#000" stroke-width="1.5" fill="none"/><path d="M964.3 114 V122.5 L966.8 125" stroke="#000" stroke-width="1.9" fill="none"/><path d="M985.1 109 V126 M987.3 109 H988.8 L990.8 111 V118 M988.3 119.5 V124.5" stroke="#000" stroke-width="1.6" fill="none"/><rect x="986.8" y="112.2" width="1.6" height="1.6" fill="#000"/><rect x="986.8" y="115.7" width="1.6" height="1.6" fill="#000"/><rect x="988.8" y="120.2" width="1.6" height="1.6" fill="#000"/><rect x="986.8" y="123.2" width="1.6" height="1.6" fill="#000"/>
<path d="M1017.5 108.5 V104.5 L1019.5 100.5 L1022 110.5 L1024.5 100.5 L1027 110.5 L1029.5 100.5 L1032 110.5 L1034.5 100.5 L1037 110.5 L1039.5 100.5 L1042 106 L1043 110" stroke="#000" stroke-width="1.5" fill="none"/><circle cx="1034.3" cy="116.6" r="5.3" fill="#f4f4f4" stroke="#000" stroke-width="1.9"/><path d="M1038.5 120.8 L1043.3 125" stroke="#000" stroke-width="2.8"/>
<path d="M1057.8 111.5 V107 L1060 102.5 H1063 L1067 110 L1069 114.5 M1072 108 L1075 102.5 H1077 L1080 108 H1085" stroke="#000" stroke-width="1.5" fill="none"/><circle cx="1073.9" cy="116.6" r="5.3" fill="#f4f4f4" stroke="#000" stroke-width="1.9"/><path d="M1078.1 120.8 L1083 125" stroke="#000" stroke-width="2.8"/>
<path d="M1114.5 102.5 H1138.8 V113.3 H1124 L1117.5 119.5 V113.3 H1114.5 Z" stroke="#000" stroke-width="1.9" fill="#fff"/><path d="M1118 106.5 L1121 105.5 V111 M1123.5 111 L1127.5 105 M1129.5 111 L1133.5 105 M1131.5 110.5 H1136 L1134 106.5" stroke="#000" stroke-width="1.5" fill="none"/>
<rect x="16" y="14" width="28" height="28" fill="#fff"/><rect x="16" y="26.2" width="13.8" height="6.8" fill="#000"/><rect x="16.3" y="27.6" width="5" height="4" fill="#ee1111"/><path d="M29 27.5 L38.8 18.2" stroke="#000" stroke-width="2.3"/><polygon points="36.5,15.8 40.8,18.6 37.5,20.5" fill="#000"/><rect x="16" y="19.8" width="2" height="3" fill="#000"/><rect x="18.2" y="17.5" width="1.6" height="1.6" fill="#000"/><rect x="21.5" y="15.6" width="1.8" height="1.8" fill="#000"/><rect x="26.5" y="14.3" width="7" height="1.8" fill="#000"/><rect x="28.7" y="15.8" width="2" height="1.6" fill="#000"/><polygon points="24.3,41.8 43.8,22.3 43.8,41.8" fill="#5bb82c"/>
</svg>
<div style="position:absolute;left:0;top:0;width:1494px;height:1165px;will-change:transform">
<span class="t" style="left:49.63px;top:18.36px;font-size:21.9px;color:#838383;transform:scaleX(0.8663)">GOSSEN METRAWATT</span>
<span class="t" style="left:299.09px;top:18.36px;font-size:21.9px;color:#838383;transform:scaleX(0.9073)">METRAwin 10</span>
<span class="t" style="left:471.55px;top:18.36px;font-size:21.9px;color:#838383;transform:scaleX(0.9529)">Registered for: Notebookcheck</span>
<span class="t" style="left:14.13px;top:61.53px;font-size:23px;color:#5f5a60;transform:scaleX(0.8705)">File</span>
<span class="t" style="left:70.14px;top:61.53px;font-size:23px;color:#5f5a60;transform:scaleX(0.8562)">Edit</span>
<span class="t" style="left:130.00px;top:61.53px;font-size:23px;color:#5f5a60;transform:scaleX(0.8790)">View</span>
<span class="t" style="left:198.12px;top:61.53px;font-size:23px;color:#5f5a60;transform:scaleX(0.8787)">Device</span>
<span class="t" style="left:283.57px;top:61.53px;font-size:23px;color:#5f5a60;transform:scaleX(0.9323)">Options</span>
<span class="t" style="left:381.57px;top:61.53px;font-size:23px;color:#5f5a60;transform:scaleX(0.9338)">Help</span>
<span class="t" style="left:11.20px;top:145.20px;font-size:22.8px;color:#161616;transform:scaleX(0.7732)">Trig: OFF</span>
<span class="t" style="left:10.43px;top:171.50px;font-size:22.8px;color:#161616;transform:scaleX(0.7658)">Chan:</span>
<span class="t" style="left:69.67px;top:171.50px;font-size:22.8px;color:#161616;transform:scaleX(0.8316)">123456789</span>
<span class="t" style="left:401.49px;top:145.70px;font-size:22.8px;color:#161616;transform:scaleX(0.8072)">Status:</span>
<span class="t" style="left:475.09px;top:145.70px;font-size:22.8px;color:#161616;transform:scaleX(0.8105)">Browsing Data</span>
<span class="t" style="left:401.47px;top:171.90px;font-size:22.8px;color:#161616;transform:scaleX(0.8282)">Records: 302</span>
<span class="t" style="left:528.28px;top:171.90px;font-size:22.8px;color:#161616;transform:scaleX(0.8586)">Intrv. 1.0</span>
<span class="t" style="left:78.50px;top:223.80px;font-size:22.8px;color:#161616;transform:scaleX(0.8287)">0.9</span>
<span class="t" style="left:152.81px;top:223.80px;font-size:22.8px;color:#161616;transform:scaleX(0.8889)">kW</span>
<span class="t" style="left:93.70px;top:840.90px;font-size:22.8px;color:#161616;transform:scaleX(0.8917)">0</span>
<span class="t" style="left:152.40px;top:840.90px;font-size:22.8px;color:#161616;transform:scaleX(0.8982)">kW</span>
<span class="t" style="left:122.68px;top:880.70px;font-size:22.8px;color:#161616;transform:scaleX(0.8202)">HH:MM:SS</span>
<span class="t" style="left:336.50px;top:880.70px;font-size:22.8px;color:#161616;transform:scaleX(0.8210)">00:00:30</span>
<span class="t" style="left:459.03px;top:880.70px;font-size:22.8px;color:#161616;transform:scaleX(0.8210)">00:01:00</span>
<span class="t" style="left:581.56px;top:880.70px;font-size:22.8px;color:#161616;transform:scaleX(0.8210)">00:01:30</span>
<span class="t" style="left:704.09px;top:880.70px;font-size:22.8px;color:#161616;transform:scaleX(0.8210)">00:02:00</span>
<span class="t" style="left:826.62px;top:880.70px;font-size:22.8px;color:#161616;transform:scaleX(0.8210)">00:02:30</span>
<span class="t" style="left:949.15px;top:880.70px;font-size:22.8px;color:#161616;transform:scaleX(0.8210)">00:03:00</span>
<span class="t" style="left:1071.68px;top:880.70px;font-size:22.8px;color:#161616;transform:scaleX(0.8210)">00:03:30</span>
<span class="t" style="left:1194.21px;top:880.70px;font-size:22.8px;color:#161616;transform:scaleX(0.8210)">00:04:00</span>
<span class="t" style="left:1316.74px;top:880.70px;font-size:22.8px;color:#161616;transform:scaleX(0.8210)">00:04:30</span>
<span class="t" style="left:14.90px;top:926.00px;font-size:22.8px;color:#161616;transform:scaleX(0.7973)">Channel:</span>
<span class="t" style="left:154.17px;top:926.00px;font-size:22.8px;color:#161616;transform:scaleX(0.8347)">Min:</span>
<span class="t" style="left:287.80px;top:926.00px;font-size:22.8px;color:#161616;transform:scaleX(0.7993)">Avr:</span>
<span class="t" style="left:417.60px;top:926.00px;font-size:22.8px;color:#161616;transform:scaleX(0.7967)">Max:</span>
<span class="t" style="left:497.19px;top:926.00px;font-size:22.8px;color:#161616;transform:scaleX(0.8091)">Curs: « 00:00:07 (-05:01)</span>
<span class="t" style="left:25.40px;top:957.30px;font-size:22.8px;color:#161616;transform:scaleX(0.6000)">1</span>
<span class="t" style="left:62.25px;top:957.30px;font-size:22.8px;color:#161616;transform:scaleX(0.7471)">M</span>
<span class="t" style="left:129.50px;top:957.70px;font-size:22.8px;color:#161616;transform:scaleX(0.8255)">415.79</span>
<span class="t" style="left:262.00px;top:957.70px;font-size:22.8px;color:#161616;transform:scaleX(0.8109)">482.74</span>
<span class="t" style="left:393.80px;top:957.70px;font-size:22.8px;color:#161616;transform:scaleX(0.8142)">0.8092 k</span>
<span class="t" style="left:526.50px;top:957.70px;font-size:22.8px;color:#161616;transform:scaleX(0.8328)">447.50</span>
<span class="t" style="left:663.00px;top:957.70px;font-size:22.8px;color:#161616;transform:scaleX(0.8255)">495.85</span>
<span class="t" style="left:735.00px;top:957.70px;font-size:22.8px;color:#161616;transform:scaleX(0.8636)">W</span>
<span class="t" style="left:827.00px;top:957.70px;font-size:22.8px;color:#161616;transform:scaleX(0.8371)">048.35</span>
<span class="t" style="left:1251.89px;top:1136.98px;font-size:22px;color:#000;transform:scaleX(0.9086)">METRAHit Starline-Seri</span>
</div>
</body></html>
